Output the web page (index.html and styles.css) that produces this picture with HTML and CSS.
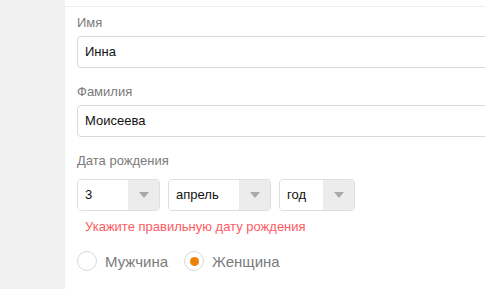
FILE: index.html
```html
<!DOCTYPE html>
<html lang="ru">
<head>
  <meta charset="UTF-8">
  <title>Профиль</title>
  <link rel="stylesheet" href="styles.css">
</head>
<body>
<aside class="sidebar"></aside>
<main class="panel">
  <div class="panel-top"></div>
  <form class="form">
    <div class="field">
      <label class="label">Имя</label>
      <div class="input">Инна</div>
    </div>
    <div class="field">
      <label class="label">Фамилия</label>
      <div class="input">Моисеева</div>
    </div>
    <div class="field field-date">
      <label class="label">Дата рождения</label>
      <div class="date-row">
        <div class="select select-day"><span class="value">3</span><span class="arrow"></span></div>
        <div class="select select-month"><span class="value">апрель</span><span class="arrow"></span></div>
        <div class="select select-year"><span class="value">год</span><span class="arrow"></span></div>
      </div>
      <p class="error">Укажите правильную дату рождения</p>
    </div>
    <div class="gender">
      <span class="radio"><span class="dot"></span>Мужчина</span>
      <span class="radio checked"><span class="dot"></span>Женщина</span>
    </div>
  </form>
</main>
</body>
</html>
```
FILE: styles.css
```css
*{box-sizing:border-box;margin:0;padding:0}
html,body{height:100%}
body{display:flex;overflow:hidden;font-family:"Liberation Sans",Arial,sans-serif;background:#fff;color:#000}
.sidebar{width:65px;flex:none;background:#f0f0f0}
.panel{flex:1;overflow:hidden;background:#fff}
.panel-top{height:7px;border-bottom:1px solid #ececec}
.form{padding:8px 0 0 12px;width:480px}
.field{margin-bottom:16px}
.label{display:block;font-size:13px;line-height:16px;color:#7b7b7b;margin-bottom:5px}
.input{height:32px;border:1px solid #d9d9d9;border-radius:4px;padding:0 7px;font-size:13px;line-height:30px;color:#111}
.field-date .label{margin-bottom:10px}
.date-row{display:flex;gap:8px}
.select{display:flex;height:32px;border:1px solid #dedede;border-radius:4px;overflow:hidden;font-size:13px;color:#111}
.select .value{flex:1;padding:0 7px;line-height:30px;background:#fff}
.select .arrow{width:31px;background:#ececec;display:flex;align-items:center;justify-content:center}
.select .arrow::after{content:"";border-left:5px solid transparent;border-right:5px solid transparent;border-top:6px solid #a9a9a9}
.select-day{width:83px}
.select-month{width:103px}
.select-year{width:76px}
.error{margin:8px 0 0 8px;font-size:13px;line-height:16px;color:#ff5a5f}
.gender{display:flex;margin-top:2px}
.radio{display:flex;align-items:center;font-size:15px;color:#7b7b7b;margin-right:16px}
.radio .dot{width:20px;height:20px;border:1px solid #dadada;border-radius:50%;margin-right:8px;display:flex;align-items:center;justify-content:center}
.radio.checked .dot::after{content:"";width:9px;height:9px;border-radius:50%;background:#ee8208}
```
